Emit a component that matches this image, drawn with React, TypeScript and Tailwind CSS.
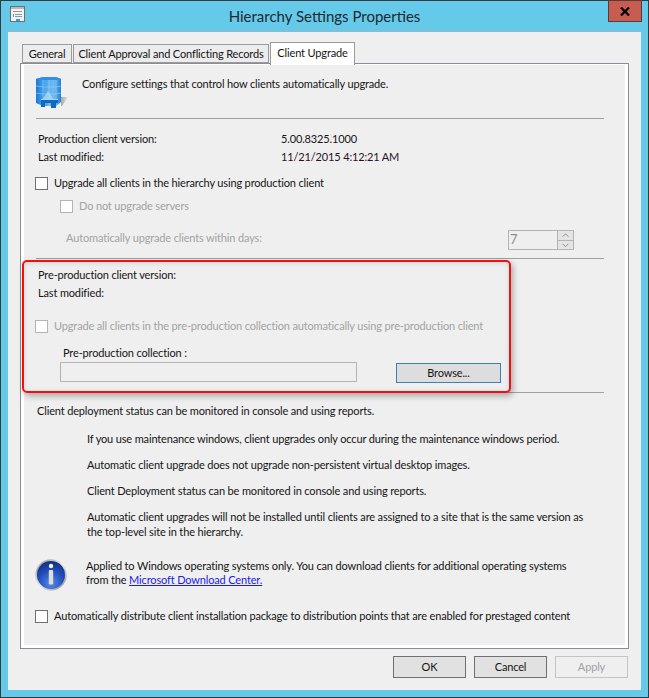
import type { ReactNode } from "react";

function Checkbox({ disabled }: { disabled?: boolean }) {
	return (
		<span
			className={`block size-[13px] shrink-0 border bg-white ${disabled ? "border-[#b4b4b4]" : "border-[#707070]"}`}
		/>
	);
}

function CheckRow({
	children,
	disabled,
	className,
}: {
	children: ReactNode;
	disabled?: boolean;
	className?: string;
}) {
	return (
		<div className={`flex h-4 items-center gap-[6px] whitespace-nowrap ${className ?? ""}`}>
			<Checkbox disabled={disabled} />
			<span className={disabled ? "text-[#a3a3a3]" : ""}>{children}</span>
		</div>
	);
}

function Divider({ className }: { className?: string }) {
	return <div className={`ml-3 h-px w-[568px] bg-[#a0a0a0] ${className ?? ""}`} />;
}

function DialogButton({
	children,
	disabled,
}: {
	children: ReactNode;
	disabled?: boolean;
}) {
	return (
		<button
			type="button"
			className={`h-[22px] w-[73px] border ${disabled ? "border-[#c4c4c4] text-[#a0a0a0]" : "border-[#707070] bg-[#e1e1e1]"}`}
		>
			{children}
		</button>
	);
}

function BuildingIcon() {
	return (
		<svg width="32" height="32" viewBox="0 0 32 32" aria-hidden="true">
			<defs>
				<linearGradient id="bld" x1="0" x2="1" y1="0" y2="0">
					<stop offset="0" stopColor="#1c7ad8" />
					<stop offset="0.3" stopColor="#45a0ec" />
					<stop offset="0.7" stopColor="#6fbcf2" />
					<stop offset="1" stopColor="#1f80dc" />
				</linearGradient>
				<linearGradient id="shade" x1="0" x2="1" y1="0" y2="0">
					<stop offset="0" stopColor="#a8a8a8" />
					<stop offset="1" stopColor="#e4e4e4" />
				</linearGradient>
			</defs>
			<path d="M25 21 L32 21 L26 30 L25 30 Z" fill="url(#shade)" />
			<path d="M0 3 L7 1 H20 L25 3 V26 L20 30 H7 L0 27 Z" fill="url(#bld)" />
			<path d="M0 3 L7 1 H20 L25 3 L20 4 H7 Z" fill="#2f8fe4" />
			<path
				d="M7 4 V30 M13 4 V30 M20 4 V30 M0 10 L7 11 H20 L25 10 M0 17 L7 18 H20 L25 17"
				stroke="#9fd2f6"
				strokeWidth="0.6"
				fill="none"
			/>
			<path d="M6 24 L12 15 L18 24 Z" fill="#b4dcf7" opacity="0.75" />
			<path d="M5 23 H22 V27 H20 V32 H15 V27 H9 V31 H5 Z" fill="#1168c0" />
			<path d="M5 23 H22 V24 H5 Z" fill="#a5d8f8" />
		</svg>
	);
}

function InfoIcon() {
	return (
		<svg width="32" height="32" viewBox="0 0 32 32" aria-hidden="true">
			<defs>
				<radialGradient id="inf" cx="0.5" cy="0.8" r="0.8">
					<stop offset="0" stopColor="#5a88e6" />
					<stop offset="0.55" stopColor="#2350bc" />
					<stop offset="1" stopColor="#132f80" />
				</radialGradient>
				<linearGradient id="rim" x1="0" x2="1" y1="0" y2="1">
					<stop offset="0" stopColor="#8e8e8e" />
					<stop offset="0.5" stopColor="#e8e8e8" />
					<stop offset="1" stopColor="#8a8a8a" />
				</linearGradient>
			</defs>
			<circle cx="16" cy="16" r="15.7" fill="url(#rim)" />
			<circle cx="16" cy="16" r="14" fill="url(#inf)" />
			<circle cx="16" cy="7" r="2.2" fill="#f2f2f2" />
			<rect x="13.8" y="11" width="4.4" height="14.5" rx="1" fill="#dcdcdc" />
		</svg>
	);
}

function WindowIcon() {
	return (
		<svg width="15" height="16" viewBox="0 0 15 16" aria-hidden="true">
			<rect x="0.5" y="0.5" width="14" height="15" fill="#f2f2f2" stroke="#6f6f6f" />
			<rect x="1" y="1" width="13" height="2" fill="#b9b9b9" />
			<path d="M3 5 H12 V6 H3 Z M5 8 H12 V9 H5 Z M5 10 H12 V11 H5 Z" fill="#8c9aa8" />
			<rect x="3" y="8" width="1" height="3" fill="#4a9bd0" />
			<rect x="6" y="13" width="4" height="2" fill="#2f9fe0" />
		</svg>
	);
}

const notes = [
	"If you use maintenance windows, client upgrades only occur during the maintenance windows period.",
	"Automatic client upgrade does not upgrade non-persistent virtual desktop images.",
	"Client Deployment status can be monitored in console and using reports.",
];

export default function App() {
	return (
		<div className="flex h-[698px] w-[649px] flex-col whitespace-nowrap border border-[#333b40] bg-[#65c9ea] font-['Lato',sans-serif] text-[11px] leading-4 tracking-[-0.15px] text-[#151515]">
			<div className="relative flex h-[30px] shrink-0 items-start pl-[9px] pt-[5px]">
				<WindowIcon />
				<div className="absolute inset-x-0 top-[5px] text-center text-[15px] leading-5 tracking-normal text-[#20292e]">
					Hierarchy Settings Properties
				</div>
				<div className="absolute right-[6px] top-[-1px] flex h-[22px] w-[34px] items-center justify-center border border-[#5a3a36] bg-[#c75c50]">
					<svg width="10" height="9" viewBox="0 0 10 9" aria-hidden="true">
						<path d="M1 0.5 L9 8.5 M9 0.5 L1 8.5" stroke="#000" strokeWidth="2.2" />
					</svg>
				</div>
			</div>

			<div className="mx-[7px] mb-[7px] flex flex-1 flex-col border-t border-[#9fb4c0] bg-[#efefef] pl-3 pr-3">
				<div className="flex h-[31px] items-end pl-[2px]">
					<div className="flex h-[19px] w-[50px] items-center justify-center border border-[#9a9a9a] bg-[#ececec]">
						General
					</div>
					<div className="ml-px flex h-[19px] w-[196px] items-center justify-center border border-[#9a9a9a] bg-[#ececec]">
						Client Approval and Conflicting Records
					</div>
					<div className="relative z-10 mb-[-2px] ml-px flex h-[23px] w-[85px] items-center justify-center border border-b-0 border-[#9a9a9a] bg-white pb-[3px]">
						Client Upgrade
					</div>
				</div>

				<div className="h-[586px] w-[609px] border border-[#8c8c96] bg-white p-[3px] pt-px">
					<div className="h-full bg-[#efefef]">
						<div className="ml-3 flex pt-[11px]">
							<BuildingIcon />
							<div className="ml-[14px]">Configure settings that control how clients automatically upgrade.</div>
						</div>
						<Divider className="mt-[10px]" />

						<div className="ml-[14px] mt-3 flex h-4">
							<div className="w-[243px]">Production client version:</div>
							<div>5.00.8325.1000</div>
						</div>
						<div className="ml-[14px] mt-[2px] flex h-4">
							<div className="w-[243px]">Last modified:</div>
							<div className="text-[#2a1226]">11/21/2015 4:12:21 AM</div>
						</div>

						<CheckRow className="ml-[11px] mt-[10px]">Upgrade all clients in the hierarchy using production client</CheckRow>
						<CheckRow disabled className="ml-9 mt-[7px]">
							Do not upgrade servers
						</CheckRow>

						<div className="ml-[42px] mt-4 flex h-5 justify-between pr-[51px]">
							<span className="text-[#a3a3a3]">Automatically upgrade clients within days:</span>
							<div className="flex h-[20px] w-[66px] border border-[#b4b4b4]">
								<span className="flex-1 pl-px text-[13px] text-[#8f8f8f]">7</span>
								<div className="flex w-4 flex-col border-l border-[#b4b4b4]">
									<svg className="flex-1 bg-[#e4e4e4]" viewBox="0 0 16 9" aria-hidden="true">
										<path d="M5 6 L8 3 L11 6" fill="none" stroke="#8a8a8a" />
									</svg>
									<svg className="flex-1 border-t border-[#b4b4b4] bg-[#e4e4e4]" viewBox="0 0 16 9" aria-hidden="true">
										<path d="M5 3 L8 6 L11 3" fill="none" stroke="#8a8a8a" />
									</svg>
								</div>
							</div>
						</div>
						<Divider className="mt-2" />

						<section className="relative pb-[9px]">
							<div className="absolute bottom-[-1px] left-[-2px] top-[1px] w-[489px] rounded-[5px] border-2 border-[#f01010] shadow-[2px_3px_6px_rgba(0,0,0,0.3),inset_0_1px_5px_rgba(0,0,0,0.12)]" />
							<div className="ml-[14px] pt-2">Pre-production client version:</div>
							<div className="ml-[14px] mt-[2px] h-4">Last modified:</div>
							<CheckRow disabled className="ml-[11px] mt-[17px]">
								Upgrade all clients in the pre-production collection automatically using pre-production client
							</CheckRow>
							<div className="ml-[39px] mt-[11px] h-4">Pre-production collection :</div>
							<div className="ml-9 mt-px flex h-[21px] items-start">
								<div className="h-[20px] w-[297px] border border-[#b4b4b4]" />
								<button
									type="button"
									className="relative ml-[39px] mt-px h-[20px] w-[105px] border border-[#3c7fb1] bg-[#dddddd]"
								>
									Browse...
								</button>
							</div>
						</section>
						<Divider />

						<div className="ml-[13px] mt-[10px]">Client deployment status can be monitored in console and using reports.</div>
						<div className="ml-[63px] mt-3 flex w-[530px] flex-col gap-[10px]">
							{notes.map((note) => (
								<div key={note}>{note}</div>
							))}
							<div className="leading-[15px]">
								Automatic client upgrades will not be installed until clients are assigned to a site that is the same version as
								<br />
								the top-level site in the hierarchy.
							</div>
						</div>

						<div className="ml-[11px] mt-5 flex">
							<InfoIcon />
							<div className="ml-[19px] leading-[14px]">
								Applied to Windows operating systems only. You can download clients for additional operating systems
								<br />
								from the <span className="text-[#1a1aee] underline">Microsoft Download Center.</span>
							</div>
						</div>

						<CheckRow className="ml-[11px] mt-[17px]">
							Automatically distribute client installation package to distribution points that are enabled for prestaged content
						</CheckRow>
					</div>
				</div>

				<div className="mt-[7px] flex justify-end gap-2 pr-px">
					<DialogButton>OK</DialogButton>
					<DialogButton>Cancel</DialogButton>
					<DialogButton disabled>Apply</DialogButton>
				</div>
			</div>
		</div>
	);
}
